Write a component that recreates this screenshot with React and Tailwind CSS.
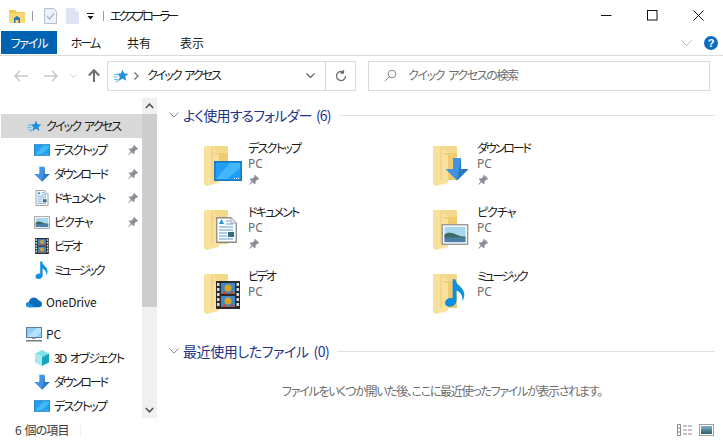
import React from "react";

const Pin = ({ className = "" }) => (
  <svg width="12" height="12" viewBox="0 0 12 12" className={className}>
    <path d="M7 .8l4.200 4.200-1 .7-.7-.2-2 2 .1 2-.9.7-2-2L1.300 11 1 10.700l2.700-3.500-2-2 .8-.8 2 .1 2-2-.2-.8z" fill="#8a8f96" />
  </svg>
);

const Star = ({ size = 16 }) => (
  <svg width={size} height={size} viewBox="0 0 16 16">
    <path d="M9.500 1.500l1.700 4 4.300.3-3.300 2.800 1.100 4.200-3.800-2.300-3.700 2.300 1-4.200-3.200-2.800 4.300-.3z" fill="#1f8fe0" />
    <path d="M.5 6.500h5M0 9h4.500M1 11.500h4.500M3 14l3-2" stroke="#6cc0f2" strokeWidth="1.200" />
  </svg>
);

const Desktop = ({ w = 16, h = 12 }) => (
  <svg width={w} height={h} viewBox="0 0 28 20">
    <rect x="0.750" y="0.750" width="26.500" height="18.500" fill="#1fa0f5" stroke="#1878bb" strokeWidth="1.500" />
    <path d="M2 18L16 2h10v5L13 18z" fill="#44b6fa" />
    <path d="M20 17.500h6" stroke="#fff" strokeWidth="1" strokeDasharray="1 1" />
  </svg>
);

const Download = ({ size = 16 }) => (
  <svg width={size} height={size} viewBox="0 0 24 24">
    <path d="M8 1h8v11h7.500L12 23.500.5 12H8z" fill="#3f93e0" />
    <path d="M16 1v11h7.500L12 23.500z" fill="#2d78c2" />
  </svg>
);

const Doc = ({ w = 14, h = 16 }) => (
  <svg width={w} height={h} viewBox="0 0 21 26">
    <path d="M.75.75h14l5.500 5.500v19H.75z" fill="#fff" stroke="#8b8b8b" strokeWidth="1.300" />
    <path d="M15 1v5h5" fill="#eee" stroke="#aaa" />
    <path d="M3 7l2.500-5L8 7z" fill="#2a8fdb" />
    <path d="M10 4h4M10 7h7M3 10h14M3 13h14M3 16h8M3 19h8M3 22h14" stroke="#5a9bd5" strokeWidth="1.200" />
    <rect x="12" y="15" width="6" height="5" fill="#3c6a80" />
  </svg>
);

const Picture = ({ w = 16, h = 13 }) => (
  <svg width={w} height={h} viewBox="0 0 28 22">
    <rect x="0.750" y="0.750" width="26.500" height="20.500" fill="#fff" stroke="#9a9a9a" strokeWidth="1.500" />
    <rect x="3" y="3" width="22" height="16" fill="#a9d5ef" />
    <path d="M3 11c4-3 8-2 12 0s7 2 10 2v2H3z" fill="#3a6a60" />
    <rect x="3" y="14" width="22" height="5" fill="#4a7fa5" />
  </svg>
);

const Film = ({ w = 14, h = 16 }) => (
  <svg width={w} height={h} viewBox="0 0 24 28">
    <rect width="24" height="28" fill="#2b2b2b" />
    <g fill="#ddd">
      {[2, 7, 12, 17, 22].map((y) => (
        <React.Fragment key={y}>
          <rect x="1" y={y} width="2.500" height="3" />
          <rect x="20.500" y={y} width="2.500" height="3" />
        </React.Fragment>
      ))}
    </g>
    <rect x="5" y="2" width="14" height="11" fill="#3f89c9" />
    <rect x="5" y="15" width="14" height="11" fill="#3f89c9" />
    <circle cx="12" cy="7" r="3.500" fill="#d8a520" />
    <circle cx="12" cy="20" r="3.500" fill="#d8a520" />
    <path d="M5 13l4-3 3 3zM13 13l3-3 3 3zM5 26l4-3 3 3zM13 26l3-3 3 3z" fill="#c94b3c" />
  </svg>
);

const Note = ({ w = 14, h = 18 }) => (
  <svg width={w} height={h} viewBox="0 0 22 30">
    <path d="M8 1h3c.5 5 4 6 7 10 3 4 3 9 0 13 1-5-1-9-6-11v11c0 3-3 6-7 6-3 0-5-1.500-5-4 0-3.500 4-6 8-5z" fill="#0f8fe0" />
  </svg>
);

const Cloud = () => (
  <svg width="17" height="11" viewBox="0 0 24 15">
    <path d="M5 14.500C2 14.500 0 13 0 10.500S2 7 4 7c1-4 4-7 8-7 3 0 5 1.500 6.500 4C22 4.500 24 7 24 10c0 3-2 4.500-4.500 4.500z" fill="#0f6cbd" />
    <path d="M5 14.500C2 14.500 0 13 0 10.500S2 7 4 7l9 7.500z" fill="#1490df" />
  </svg>
);

const Monitor = () => (
  <svg width="16" height="15" viewBox="0 0 16 15">
    <rect x="0.500" y="0.500" width="15" height="10" fill="#8ed0f5" stroke="#5a7d94" />
    <path d="M1 10L11 1h4v4l-5 5z" fill="#b8e3fa" />
    <rect x="6" y="11" width="4" height="1" fill="#9aa8b0" />
    <rect y="13" width="16" height="1.500" fill="#6f7f88" />
  </svg>
);

const Cube = () => (
  <svg width="16" height="16" viewBox="0 0 16 16">
    <path d="M8 0l7 3.500-7 3.500L1 3.500z" fill="#7fe0ea" />
    <path d="M1 3.500L8 7v9l-7-3.500z" fill="#a8e8ee" />
    <path d="M15 3.500L8 7v9l7-3.500z" fill="#12a7be" />
  </svg>
);

const Folder = ({ children }) => (
  <div className="relative w-[40px] h-[42px] shrink-0">
    <svg width="26" height="42" viewBox="0 0 26 42">
      <path d="M1 2h24v28H1z" fill="#f5d98a" />
      <path d="M1 2h7l8 7v30L3 42 1 40z" fill="#f8e19c" />
      <path d="M9 4v32" stroke="#ecc976" strokeWidth="1" />
      <path d="M9 9h16v27H16V11z" fill="#f0cb72" />
    </svg>
    {children}
  </div>
);

const SideRow = ({ icon, label, pin, indent, selected, mt, track = "tracking-[-1.4px]" }) => (
  <div className={`flex items-center h-6 shrink-0 ${selected ? "bg-[#d9d9d9]" : ""} ${mt ? "mt-2" : ""} ${indent ? "pl-[33px]" : "pl-[25px]"}`}>
    <span className="w-[16px] flex items-center justify-center shrink-0">{icon}</span>
    <span className={`ml-1 -mt-px text-[12px] text-[#1a1a1a] whitespace-nowrap flex-1 [word-spacing:3px] ${track}`}>{label}</span>
    {pin && <Pin className="mr-[3px]" />}
  </div>
);

const Tile = ({ icon, name, pin, track }) => (
  <div className="flex h-[64px]">
    <Folder>{icon}</Folder>
    <div className="ml-[5px] flex flex-col -mt-[4px]">
      <span className={`text-[12px] leading-[16px] text-[#1a1a1a] whitespace-nowrap ${track}`}>{name}</span>
      <span className="text-[12px] leading-[16px] text-[#6d6d6d] [font-family:'Noto_Sans',sans-serif]">PC</span>
      {pin && <Pin className="mt-[2px]" />}
    </div>
  </div>
);

const Section = ({ label, track }) => (
  <div className="flex items-center h-6">
    <svg width="10" height="6" viewBox="0 0 10 6" className="ml-[12px] shrink-0">
      <path d="M.5.500L5 5l4.500-4.500" fill="none" stroke="#8a8a8a" />
    </svg>
    <span className={`ml-[4px] text-[14px] text-[#1e3287] whitespace-nowrap [word-spacing:2px] ${track}`}>{label}</span>
    <div className="ml-[8px] mr-[8px] flex-1 h-px bg-[#e2e2e2]" />
  </div>
);

export default function App() {
  return (
    <div className="w-[723px] h-[442px] bg-white flex flex-col overflow-hidden [font-family:'Noto_Sans_CJK_JP','Noto_Sans',sans-serif] [font-feature-settings:'palt']">
      {/* title bar */}
      <div className="h-[31px] flex items-center shrink-0 pl-[9px]">
        <svg width="16" height="14" viewBox="0 0 16 14">
          <path d="M0 1h6l2 2h8v11H0z" fill="#f2c94f" />
          <path d="M0 4h16v10H0z" fill="#f8d775" />
          <path d="M5 14V9l3-2 3 2v5H9.500v-3h-3v3z" fill="#2a78b8" />
        </svg>
        <div className="w-px h-[10px] bg-[#9a9a9a] ml-[7px]" />
        <svg width="13" height="16" viewBox="0 0 13 16" className="ml-[11px]">
          <path d="M.5.500h9l3 3v12H.5z" fill="#eef2f9" stroke="#b4bfd0" />
          <path d="M3 8l2.500 3L10 5.500" fill="none" stroke="#a9b5c6" strokeWidth="1.200" />
        </svg>
        <svg width="13" height="16" viewBox="0 0 13 16" className="ml-[9px]">
          <path d="M0 0h9l4 4v12H0z" fill="#dce4f2" />
          <path d="M9 0l4 4H9z" fill="#eef2f9" />
        </svg>
        <svg width="7" height="7" viewBox="0 0 7 7" className="ml-[8px] mt-[2px]">
          <path d="M0 0h7v1H0zM.5 3h6L3.500 6.500z" fill="#1a1a1a" />
        </svg>
        <div className="w-px h-[10px] bg-[#9a9a9a] ml-[9px]" />
        <span className="ml-[6px] text-[12px] tracking-[-2.9px] text-[#1a1a1a] whitespace-nowrap">エクスプローラー</span>
        <div className="ml-auto flex items-center mr-[19px] gap-[35px]">
          <svg width="11" height="11" viewBox="0 0 11 11"><path d="M0 5.500h10.500" stroke="#111" /></svg>
          <svg width="11" height="11" viewBox="0 0 11 11"><rect x=".5" y=".5" width="9.500" height="9.500" fill="none" stroke="#111" /></svg>
          <svg width="11" height="11" viewBox="0 0 11 11"><path d="M.5.500l10 10M10.500.500l-10 10" stroke="#111" /></svg>
        </div>
      </div>

      {/* ribbon */}
      <div className="h-[25px] flex items-center shrink-0 border-b border-[#dadbdc] pl-px pr-[5px]">
        <div className="self-start w-[56px] h-[23px] bg-[#0063b1] text-white text-[12px] tracking-[-1.2px] flex items-center justify-center">ファイル</div>
        <div className="flex text-[12px] text-[#1a1a1a] -mt-px">
          <span className="w-[56px] text-center tracking-[-2px]">ホーム</span>
          <span className="w-[52px] text-center">共有</span>
          <span className="w-[54px] text-center">表示</span>
        </div>
        <svg width="11" height="6" viewBox="0 0 11 6" className="ml-auto"><path d="M.5.500l5 5 5-5" fill="none" stroke="#b5b5b5" /></svg>
        <div className="ml-[12px] w-[14px] h-[14px] rounded-full bg-[#0f6cbd] text-white text-[11px] font-bold flex items-center justify-center [font-family:'Liberation_Sans',sans-serif]">?</div>
      </div>

      {/* nav */}
      <div className="h-[42px] flex items-center shrink-0 pl-[14px] pr-[13px] pb-[3px]">
        <svg width="14" height="12" viewBox="0 0 14 12"><path d="M6 .8L1 6l5 5.200M1 6h13" fill="none" stroke="#c8c8c8" strokeWidth="1.500" /></svg>
        <svg width="14" height="12" viewBox="0 0 14 12" className="ml-[16px]"><path d="M8 .8L13 6l-5 5.200M13 6H0" fill="none" stroke="#c8c8c8" strokeWidth="1.500" /></svg>
        <svg width="7" height="4" viewBox="0 0 7 4" className="ml-[12px]"><path d="M.5.500l3 3 3-3" fill="none" stroke="#c8c8c8" /></svg>
        <svg width="12" height="13" viewBox="0 0 12 13" className="ml-[11px]"><path d="M6 13V1.500M.8 6.500L6 1.200l5.200 5.300" fill="none" stroke="#6d6d6d" strokeWidth="2" /></svg>
        <div className="ml-[7px] w-[249px] h-[30px] border border-[#d9d9d9] flex items-center shrink-0">
          <span className="ml-[5px] flex"><Star size={16} /></span>
          <svg width="5" height="8" viewBox="0 0 5 8" className="ml-[5px]"><path d="M.5.500L4 4 .5 7.500" fill="none" stroke="#6d6d6d" strokeWidth="1.200" /></svg>
          <span className="ml-[8px] -mt-px text-[12px] tracking-[-2px] [word-spacing:3px] text-[#1a1a1a] whitespace-nowrap">クイック アクセス</span>
          <svg width="9" height="5" viewBox="0 0 9 5" className="ml-auto mr-[10px]"><path d="M.5.500L4.500 4.500 8.500.500" fill="none" stroke="#6d6d6d" strokeWidth="1.400" /></svg>
          <div className="w-[30px] h-full border-l border-[#d9d9d9] flex items-center justify-center shrink-0">
            <svg width="12" height="12" viewBox="0 0 12 12"><path d="M10.500 6A4.500 4.500 0 1 1 8.500 2.300M8.500 0v3H5.500" fill="none" stroke="#6d6d6d" strokeWidth="1.300" /></svg>
          </div>
        </div>
        <div className="ml-[12px] flex-1 h-[30px] border border-[#d9d9d9] flex items-center pl-[15px]">
          <svg width="13" height="13" viewBox="0 0 13 13"><circle cx="8" cy="5" r="3.800" fill="none" stroke="#8a8a8a" /><path d="M5.200 7.800L.8 12.200" stroke="#8a8a8a" /></svg>
          <span className="ml-[11px] -mt-px text-[12px] tracking-[-1.4px] [word-spacing:3px] text-[#6d6d6d] whitespace-nowrap">クイック アクセスの検索</span>
        </div>
      </div>

      {/* body */}
      <div className="flex-1 min-h-0 flex">
        <div className="w-[142px] shrink-0 pl-px pt-[16px] flex flex-col overflow-hidden">
          <SideRow selected icon={<Star size={15} />} label="クイック アクセス" track="tracking-[-1.85px]" />
          <SideRow indent pin icon={<Desktop />} label="デスクトップ" track="tracking-[-1.7px]" />
          <SideRow indent pin icon={<Download />} label="ダウンロード" track="tracking-[-2.1px]" />
          <SideRow indent pin icon={<Doc />} label="ドキュメント" track="tracking-[-1.8px]" />
          <SideRow indent pin icon={<Picture />} label="ピクチャ" track="tracking-[-1px]" />
          <SideRow indent icon={<Film />} label="ビデオ" track="tracking-[-2.200px]" />
          <SideRow indent icon={<Note />} label="ミュージック" track="tracking-[-2.400px]" />
          <SideRow mt icon={<Cloud />} label="OneDrive" track="tracking-[-0.2px]" />
          <SideRow mt icon={<Monitor />} label="PC" track="tracking-[0px]" />
          <SideRow indent icon={<Cube />} label="3D オブジェクト" track="tracking-[-1.6px]" />
          <SideRow indent icon={<Download />} label="ダウンロード" track="tracking-[-2.1px]" />
          <SideRow indent icon={<Desktop />} label="デスクトップ" track="tracking-[-1.7px]" />
        </div>

        {/* scrollbar */}
        <div className="w-[15px] shrink-0 bg-[#f0f0f0] flex flex-col h-[320px]">
          <div className="h-[16px] flex items-center justify-center shrink-0">
            <svg width="9" height="6" viewBox="0 0 9 6"><path d="M.8 5L4.500 1.200 8.200 5" fill="none" stroke="#505050" strokeWidth="1.500" /></svg>
          </div>
          <div className="h-[193px] bg-[#cdcdcd] shrink-0" />
          <div className="flex-1" />
          <div className="h-[16px] flex items-center justify-center shrink-0">
            <svg width="9" height="6" viewBox="0 0 9 6"><path d="M.8 1L4.500 4.800 8.200 1" fill="none" stroke="#505050" strokeWidth="1.500" /></svg>
          </div>
        </div>

        <div className="flex-1 min-w-0 pt-[5px] flex flex-col">
          <Section label="よく使用するフォルダー (6)" track="tracking-[-0.8px]" />
          <div className="grid grid-cols-[229px_1fr] pl-[46px] pt-[17px]">
            <Tile pin name="デスクトップ" track="tracking-[-1.7px]" icon={<span className="absolute left-[11px] top-[17px]"><Desktop w={28} h={20} /></span>} />
            <Tile pin name="ダウンロード" track="tracking-[-2.100px]" icon={<span className="absolute left-[13px] top-[13px]"><Download size={24} /></span>} />
            <Tile pin name="ドキュメント" track="tracking-[-1.800px]" icon={<span className="absolute left-[13px] top-[8px]"><Doc w={21} h={28} /></span>} />
            <Tile pin name="ピクチャ" track="tracking-[-1px]" icon={<span className="absolute left-[9px] top-[16px]"><Picture w={28} h={21} /></span>} />
            <Tile name="ビデオ" track="tracking-[-2.200px]" icon={<span className="absolute left-[13px] top-[9px]"><Film w={24} h={28} /></span>} />
            <Tile name="ミュージック" track="tracking-[-2.400px]" icon={<span className="absolute left-[13px] top-[4px]"><Note w={21} h={33} /></span>} />
          </div>
          <div className="mt-[3px]"><Section label="最近使用したファイル (0)" track="tracking-[-0.4px]" /></div>
          <div className="mt-[19px] pl-[125px] text-[12px] tracking-[-1.3px] text-[#6d6d6d] whitespace-nowrap">ファイルをいくつか開いた後、ここに最近使ったファイルが表示されます。</div>
        </div>
      </div>

      {/* status */}
      <div className="h-[24px] shrink-0 flex items-center pl-[15px] pr-[9px]">
        <span className="text-[12px] tracking-[-0.9px] [word-spacing:2px] text-[#3a3a3a] w-[65px] whitespace-nowrap">6 個の項目</span>
        <div className="w-px h-[14px] bg-[#efefef]" />
        <svg width="16" height="12" viewBox="0 0 16 12" className="ml-auto"><path d="M.5.500h3v11h-3zM.5 4h3M.5 8h3M6 2h4M11 2h4M6 6h4M11 6h4M6 10h4M11 10h4" fill="none" stroke="#8a8a8a" /></svg>
        <div className="ml-[6px] w-[15px] h-[12px] border border-[#a0a0a0] bg-white p-px flex"><div className="flex-1 bg-gradient-to-b from-[#7db3d3] to-[#2f5f6f]" /></div>
      </div>
    </div>
  );
}
